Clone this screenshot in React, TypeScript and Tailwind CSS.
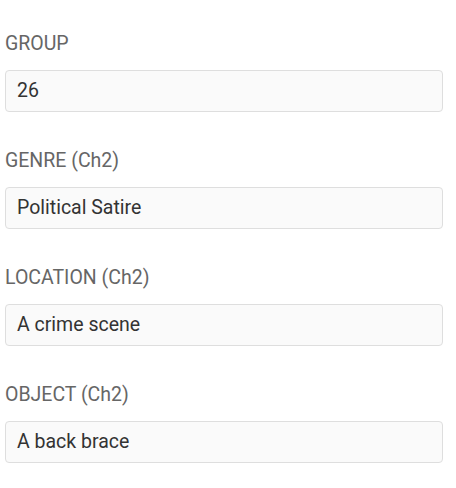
const fields = [
  { label: 'GROUP', value: '26' },
  { label: 'GENRE (Ch2)', value: 'Political Satire' },
  { label: 'LOCATION (Ch2)', value: 'A crime scene' },
  { label: 'OBJECT (Ch2)', value: 'A back brace' },
];

export default function App() {
  return (
    <div className="min-h-screen bg-white pt-[32px] pl-[5px] pr-[13px] font-['Roboto',sans-serif]">
      <div className="flex flex-col gap-[37px]">
        {fields.map((f) => (
          <div key={f.label}>
            <div className="h-[24px] text-[19.5px] leading-[24px] text-[#666]">{f.label}</div>
            <div className="mt-[14px] flex h-[42px] items-center rounded-[4px] border border-[#dedede] bg-[#fafafa] px-[11px] text-[19.5px] text-[#333]">
              {f.value}
            </div>
          </div>
        ))}
      </div>
    </div>
  );
}
